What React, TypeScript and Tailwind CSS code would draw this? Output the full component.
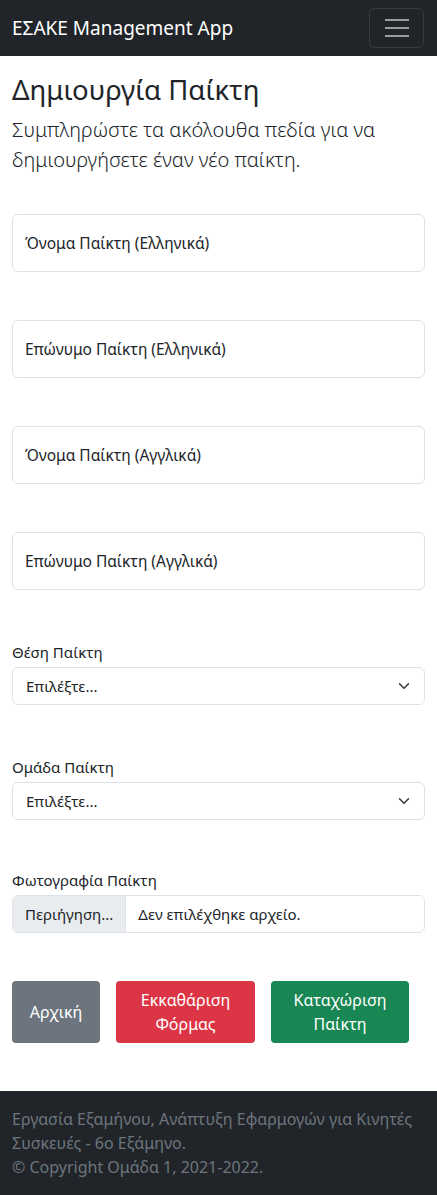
import React from "react";

const font = { fontFamily: '"Segoe UI", "Noto Sans", "Liberation Sans", sans-serif' };

function FloatingInput({ label, mb }: { label: string; mb: string }) {
  return (
    <div className={`${mb} h-[58px] rounded-[6px] border border-[#dee2e6] bg-white flex items-center px-3 text-[15.5px] leading-6 text-[#212529]`}>
      {label}
    </div>
  );
}

function Chevron() {
  return (
    <svg width="16" height="12" viewBox="0 0 16 16" className="shrink-0" fill="none" stroke="#343a40" strokeWidth="2" strokeLinecap="round" strokeLinejoin="round">
      <path d="m2 5 6 6 6-6" />
    </svg>
  );
}

function SelectField({ label, mb }: { label: string; mb: string }) {
  return (
    <div className={mb}>
      <div className="text-[15px] leading-[22px] text-[#212529] mb-[4px]">{label}</div>
      <div className="h-[38px] rounded-[6px] border border-[#dee2e6] flex items-center justify-between pl-[13px] pr-3 text-[15px] text-[#212529]">
        <span>Επιλέξτε...</span>
        <Chevron />
      </div>
    </div>
  );
}

export default function App() {
  return (
    <div className="min-h-[1195px] bg-white flex flex-col" style={font}>
      <nav className="h-14 bg-[#212529] flex items-center justify-between pl-3 pr-[13px]">
        <span className="text-white text-[19px] leading-[30px]">ΕΣΑΚΕ Management App</span>
        <div className="w-[55px] h-[40px] rounded-[6px] border border-[rgba(255,255,255,0.1)] flex flex-col items-center justify-center gap-[6px]">
          <div className="w-6 h-[2px] bg-[rgba(255,255,255,0.55)]" />
          <div className="w-6 h-[2px] bg-[rgba(255,255,255,0.55)]" />
          <div className="w-6 h-[2px] bg-[rgba(255,255,255,0.55)]" />
        </div>
      </nav>

      <main className="px-3 pt-[17px] flex-1">
        <h1 className="text-[27.5px] leading-[34px] font-normal text-[#212529] mb-[8px]">Δημιουργία Παίκτη</h1>
        <p className="text-[20px] leading-[30px] font-light text-[#212529]">
          Συμπληρώστε τα ακόλουθα πεδία για να δημιουργήσετε έναν νέο παίκτη.
        </p>

        <div className="mt-[39px]">
          <FloatingInput label="Όνομα Παίκτη (Ελληνικά)" mb="mb-[48px]" />
          <FloatingInput label="Επώνυμο Παίκτη (Ελληνικά)" mb="mb-[48px]" />
          <FloatingInput label="Όνομα Παίκτη (Αγγλικά)" mb="mb-[48px]" />
          <FloatingInput label="Επώνυμο Παίκτη (Αγγλικά)" mb="mb-[51px]" />

          <SelectField label="Θέση Παίκτη" mb="mb-[51px]" />
          <SelectField label="Ομάδα Παίκτη" mb="mb-[49px]" />

          <div>
            <div className="text-[15px] leading-[22px] text-[#212529] mb-[4px]">Φωτογραφία Παίκτη</div>
            <div className="h-[38px] rounded-[6px] border border-[#dee2e6] flex items-stretch text-[15px] text-[#212529] overflow-hidden">
              <div className="bg-[#e9ecef] border-r border-[#dee2e6] px-3 flex items-center">Περιήγηση...</div>
              <div className="px-3 flex items-center">Δεν επιλέχθηκε αρχείο.</div>
            </div>
          </div>

          <div className="mt-[48px] flex gap-4 text-white text-[16px] leading-6 text-center">
            <button className="h-[62px] w-[88px] rounded-[4px] bg-[#6c757d]">Αρχική</button>
            <button className="h-[62px] w-[139px] rounded-[4px] bg-[#dc3545]">Εκκαθάριση<br />Φόρμας</button>
            <button className="h-[62px] w-[138px] rounded-[4px] bg-[#198754]">Καταχώριση<br />Παίκτη</button>
          </div>
        </div>
      </main>

      <footer className="mt-[48px] bg-[#212529] px-3 pt-[16px] pb-[16px] text-[#6c757d] text-[16px] leading-6">
        Εργασία Εξαμήνου, Ανάπτυξη Εφαρμογών για Κινητές Συσκευές - 6ο Εξάμηνο.
        <br />© Copyright Ομάδα 1, 2021-2022.
      </footer>
    </div>
  );
}
